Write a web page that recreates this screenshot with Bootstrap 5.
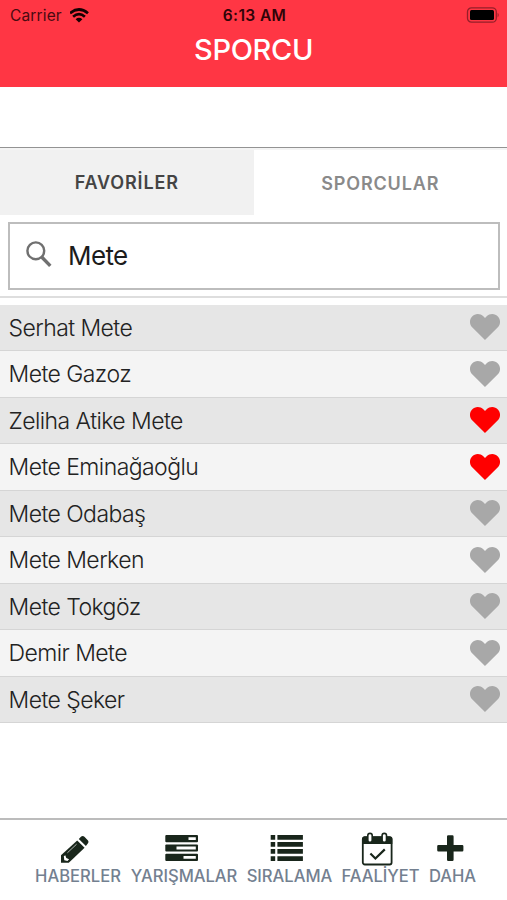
<!DOCTYPE html>
<html lang="tr">
<head>
<meta charset="utf-8">
<meta name="viewport" content="width=device-width, initial-scale=1">
<title>Sporcu</title>
<link href="https://cdn.jsdelivr.net/npm/bootstrap@5.3.0/dist/css/bootstrap.min.css" rel="stylesheet">
<style>
body{font-family:Inter,"Liberation Sans",sans-serif;height:900px;overflow:hidden;color:#222}
svg{display:block}
.app-head{background:#ff3644;height:86.5px;flex:none}
.status{height:31px;font-size:15.5px;line-height:30px;color:#4a0a10;padding:0 8px 2px 10px;letter-spacing:.15px}
.status .side{flex:1 1 0}
.status .label{padding-top:2px}
.status .wifi{margin-top:1px}
.clock{font-weight:600;color:#300408;letter-spacing:.4px}
.title{font-size:29px;line-height:38px;font-weight:500;color:#fff;margin:0;letter-spacing:-.35px}
.blank{height:61px;border-bottom:1px solid #939393;flex:none;box-sizing:border-box}
.tabs{height:67.5px;border-top:2px solid #f4f4f4;flex:none}
.tab{font-size:18px;font-weight:600;color:#8a8a8a;line-height:67px;text-align:center;height:65.5px;letter-spacing:.85px}
.tab.on{background:#f1f1f1;color:#444;line-height:65px}
.search-wrap{padding:7px 7px 6px 8px;border-bottom:2px solid #dedede;height:82.5px;flex:none}
.search{border:2px solid #bdbdbd;height:67.5px;padding-left:16px;font-size:26px;color:#1c1c1c}
.search svg{margin-bottom:4px}
.search input{border:0;outline:0;padding:0;margin-left:16px;background:none;letter-spacing:-.6px;color:inherit}
.athletes{margin-top:7px;flex:none}
.athlete{height:46.5px;padding:0 7.5px 0 8.5px;border-bottom:1px solid #d5d5d5;background:#f4f4f4;font-size:23px;font-weight:300;letter-spacing:-.56px;line-height:45px}
.athlete span{padding-top:2px}
.athlete:nth-child(odd){background:#e6e6e6}
.heart{fill:#a8a8a8}
.fav .heart{fill:#f00}
.bottom{margin-top:auto;height:82px;border-top:2px solid #bcbcbc;padding:12px 30px 0 35px;gap:10px;font-size:16.6px;font-weight:500;letter-spacing:-.02px;color:#738090;flex:none}
.tool{color:#19261b}
.tool span{color:#738090;line-height:20px;white-space:nowrap}
.tool svg{height:34px;margin-right:6px}
.w1{width:86px}.w2{width:106px}.w3{width:85px}.w4{width:77px}.w5{width:47px}
.w1 svg{margin-right:7px}
.w2 svg,.w3 svg,.w4 svg{margin-right:5px}
</style>
</head>
<body class="bg-white d-flex flex-column">
<header class="app-head">
 <div class="status d-flex align-items-center">
  <div class="side d-flex align-items-center"><span class="label">Carrier</span>
   <svg class="wifi ms-2" width="20" height="15" viewBox="0 0 20 15" fill="none" stroke="#140002" stroke-width="2.7"><path d="M0 5.3Q9-2.3 18 5.3M3.1 8.8Q9 3.6 14.9 8.8"/><path d="M5.6 11.2Q9 8.3 12.4 11.2L9 14.6z" fill="#140002" stroke="none"/></svg></div>
  <div class="clock label">6:13 AM</div>
  <div class="side d-flex justify-content-end"><svg width="33" height="16" viewBox="0 0 33 16"><rect x="1.5" y=".8" width="28.8" height="14.4" rx="4" fill="none" stroke="#951f29" stroke-width="1.3"/><rect x="4" y="3" width="24" height="10" rx="1.5" fill="#000"/><path d="M31.6 5.8q2.2 2.2 0 4.6z" fill="#951f29"/></svg></div>
 </div>
 <h1 class="title text-center">SPORCU</h1>
</header>
<div class="blank"></div>
<nav class="tabs d-flex"><div class="tab on w-50">FAVORİLER</div><div class="tab w-50">SPORCULAR</div></nav>
<div class="search-wrap"><div class="search d-flex align-items-center">
 <svg width="26" height="28" viewBox="0 0 26 28" fill="none" stroke="#707070"><circle cx="9.8" cy="10.8" r="8.4" stroke-width="2.4"/><path d="M15.7 17l8.6 8.9" stroke-width="3.4"/></svg>
 <input type="text" value="Mete" aria-label="Ara"></div></div>
<main class="athletes">
 <div class="athlete d-flex justify-content-between align-items-center"><span>Serhat Mete</span><svg class="heart" width="30" height="26" viewBox="0 0 30 26"><path d="M15 26L2.4 13.6C-.7 10.5-.8 5.6 1.9 2.7 5-.8 10.2-.7 13.3 2.3L15 4l1.7-1.7C19.8-.7 25-.8 28.1 2.7c2.7 2.9 2.6 7.8-.5 10.9z"/></svg></div>
 <div class="athlete d-flex justify-content-between align-items-center"><span>Mete Gazoz</span><svg class="heart" width="30" height="26" viewBox="0 0 30 26"><path d="M15 26L2.4 13.6C-.7 10.5-.8 5.6 1.9 2.7 5-.8 10.2-.7 13.3 2.3L15 4l1.7-1.7C19.8-.7 25-.8 28.1 2.7c2.7 2.9 2.6 7.8-.5 10.9z"/></svg></div>
 <div class="athlete fav d-flex justify-content-between align-items-center"><span>Zeliha Atike Mete</span><svg class="heart" width="30" height="26" viewBox="0 0 30 26"><path d="M15 26L2.4 13.6C-.7 10.5-.8 5.6 1.9 2.7 5-.8 10.2-.7 13.3 2.3L15 4l1.7-1.7C19.8-.7 25-.8 28.1 2.7c2.7 2.9 2.6 7.8-.5 10.9z"/></svg></div>
 <div class="athlete fav d-flex justify-content-between align-items-center"><span>Mete Eminağaoğlu</span><svg class="heart" width="30" height="26" viewBox="0 0 30 26"><path d="M15 26L2.4 13.6C-.7 10.5-.8 5.6 1.9 2.7 5-.8 10.2-.7 13.3 2.3L15 4l1.7-1.7C19.8-.7 25-.8 28.1 2.7c2.7 2.9 2.6 7.8-.5 10.9z"/></svg></div>
 <div class="athlete d-flex justify-content-between align-items-center"><span>Mete Odabaş</span><svg class="heart" width="30" height="26" viewBox="0 0 30 26"><path d="M15 26L2.4 13.6C-.7 10.5-.8 5.6 1.9 2.7 5-.8 10.2-.7 13.3 2.3L15 4l1.7-1.7C19.8-.7 25-.8 28.1 2.7c2.7 2.9 2.6 7.8-.5 10.9z"/></svg></div>
 <div class="athlete d-flex justify-content-between align-items-center"><span>Mete Merken</span><svg class="heart" width="30" height="26" viewBox="0 0 30 26"><path d="M15 26L2.4 13.6C-.7 10.5-.8 5.6 1.9 2.7 5-.8 10.2-.7 13.3 2.3L15 4l1.7-1.7C19.8-.7 25-.8 28.1 2.7c2.7 2.9 2.6 7.8-.5 10.9z"/></svg></div>
 <div class="athlete d-flex justify-content-between align-items-center"><span>Mete Tokgöz</span><svg class="heart" width="30" height="26" viewBox="0 0 30 26"><path d="M15 26L2.4 13.6C-.7 10.5-.8 5.6 1.9 2.7 5-.8 10.2-.7 13.3 2.3L15 4l1.7-1.7C19.8-.7 25-.8 28.1 2.7c2.7 2.9 2.6 7.8-.5 10.9z"/></svg></div>
 <div class="athlete d-flex justify-content-between align-items-center"><span>Demir Mete</span><svg class="heart" width="30" height="26" viewBox="0 0 30 26"><path d="M15 26L2.4 13.6C-.7 10.5-.8 5.6 1.9 2.7 5-.8 10.2-.7 13.3 2.3L15 4l1.7-1.7C19.8-.7 25-.8 28.1 2.7c2.7 2.9 2.6 7.8-.5 10.9z"/></svg></div>
 <div class="athlete d-flex justify-content-between align-items-center"><span>Mete Şeker</span><svg class="heart" width="30" height="26" viewBox="0 0 30 26"><path d="M15 26L2.4 13.6C-.7 10.5-.8 5.6 1.9 2.7 5-.8 10.2-.7 13.3 2.3L15 4l1.7-1.7C19.8-.7 25-.8 28.1 2.7c2.7 2.9 2.6 7.8-.5 10.9z"/></svg></div>
</main>
<footer class="bottom d-flex">
 <div class="tool w1 d-flex flex-column align-items-center"><svg width="34" height="34" viewBox="0 0 34 34"><path d="M3 30.8V23.2L19.2 8.4L26.6 15.8L10.8 30.8z" fill="#19261b"/><path d="M20.8 7L23.2 4.6Q24.8 3.2 26.4 4.7L30 8.4Q31.2 10 29.8 11.6L27.9 14z" fill="#19261b"/><path d="M9.4 20.8L18.6 12.2" stroke="#aeb3af" stroke-width="1"/><path d="M5.8 24.2l1.5-1 1 2.7 2.8 1.4-1.6 1.7-3.2-.8z" fill="#fff"/></svg><span>HABERLER</span></div>
 <div class="tool w2 d-flex flex-column align-items-center"><svg width="34" height="34" viewBox="0 0 34 34"><g fill="#19261b"><rect x=".3" y="3" width="32.7" height="7.2" rx="1"/><rect x=".3" y="12.4" width="32.7" height="7.2" rx="1"/><rect x=".3" y="21.7" width="32.7" height="7.2" rx="1"/></g><path d="M23.5 5.2h7.3v2.8h-7.3zM11.5 14.6h19.3v2.8H11.5zM18.5 23.9h12.3v2.8H18.5z" fill="#fff"/></svg><span>YARIŞMALAR</span></div>
 <div class="tool w3 d-flex flex-column align-items-center"><svg width="34" height="34" viewBox="0 0 34 34" fill="#19261b"><path d="M.7 3h4.5v4.7H.7zM7.4 3h25.5v4.7H7.4zM.7 10h4.5v4.7H.7zM7.4 10h25.5v4.7H7.4zM.7 17.1h4.5v4.7H.7zM7.4 17.1h25.5v4.7H7.4zM.7 24.2h4.5v4.7H.7zM7.4 24.2h25.5v4.7H7.4z"/></svg><span>SIRALAMA</span></div>
 <div class="tool w4 d-flex flex-column align-items-center"><svg width="34" height="34" viewBox="0 0 34 34"><rect x="1.8" y="5.2" width="28.8" height="27.3" rx="2" fill="#fff" stroke="#19261b" stroke-width="1.8"/><path d="M1 12V7q0-2.5 2.5-2.5h25q2.8 0 2.8 2.5v5z" fill="#19261b"/><g fill="#fff" stroke="#19261b" stroke-width="1.6"><rect x="6.8" y="1.4" width="4.4" height="9" rx="2.2"/><rect x="21.1" y="1.4" width="4.4" height="9" rx="2.2"/></g><path d="M9.4 21.5l5 5L23.8 17.4" fill="none" stroke="#19261b" stroke-width="2.2"/></svg><span>FAALİYET</span></div>
 <div class="tool w5 d-flex flex-column align-items-center"><svg width="34" height="34" viewBox="0 0 34 34"><path d="M15.2 3.2h4.2q1.2 0 1.2 1.2v8.6h8.6q1.2 0 1.2 1.2v4q0 1.2-1.2 1.2h-8.6v8.4q0 1.2-1.2 1.2h-4.2q-1.2 0-1.2-1.2v-8.4H5.4q-1.2 0-1.2-1.2v-4q0-1.2 1.2-1.2H14V4.4q0-1.2 1.2-1.2z" fill="#19261b"/></svg><span>DAHA</span></div>
</footer>
<script src="https://cdn.jsdelivr.net/npm/bootstrap@5.3.0/dist/js/bootstrap.bundle.min.js"></script>
</body>
</html>
